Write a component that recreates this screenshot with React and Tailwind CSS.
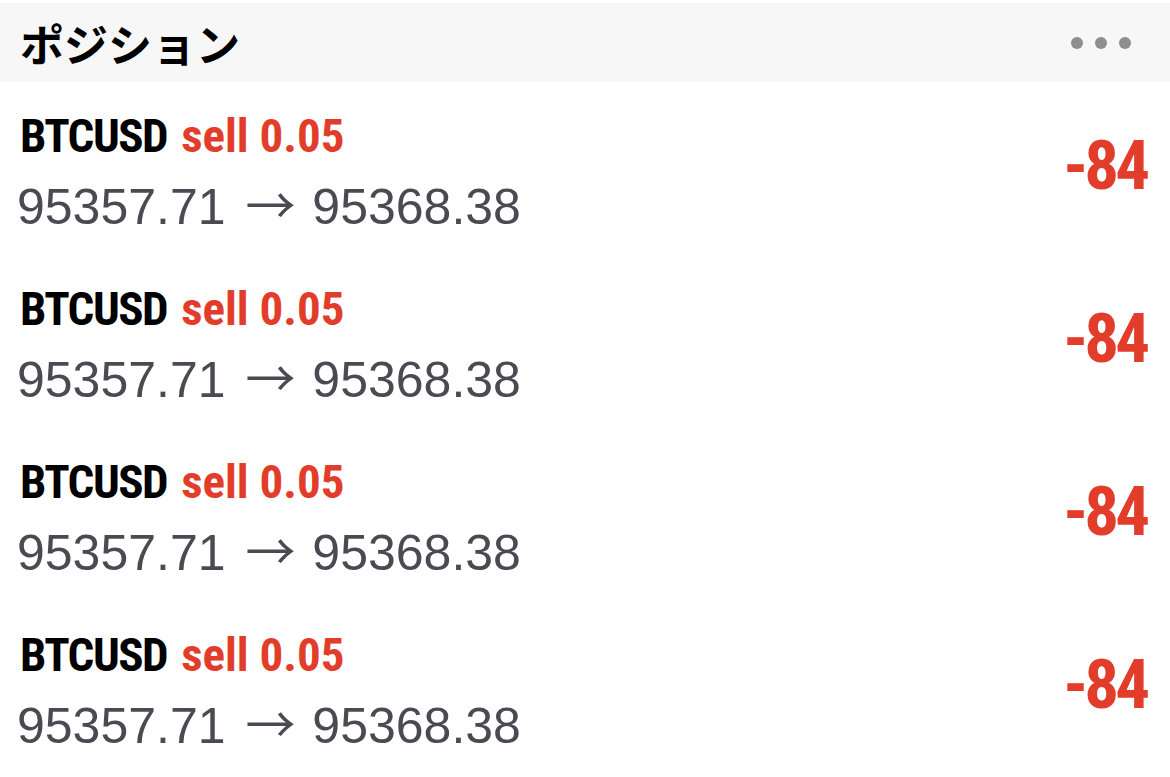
const positions = [
  { id: 1, symbol: "BTCUSD", side: "sell", lots: "0.05", open: "95357.71", current: "95368.38", profit: "-84" },
  { id: 2, symbol: "BTCUSD", side: "sell", lots: "0.05", open: "95357.71", current: "95368.38", profit: "-84" },
  { id: 3, symbol: "BTCUSD", side: "sell", lots: "0.05", open: "95357.71", current: "95368.38", profit: "-84" },
  { id: 4, symbol: "BTCUSD", side: "sell", lots: "0.05", open: "95357.71", current: "95368.38", profit: "-84" },
];

const App = () => {
  return (
    <div className="w-[1170px] h-[777px] bg-white overflow-hidden">
      {/* header */}
      <div className="mt-[3px] h-[79px] bg-[#f7f7f7] flex items-center justify-between pl-[20px] pr-[39px]">
        <h1 className="text-[44px] font-bold text-black font-['Noto_Sans_CJK_JP',sans-serif] leading-none">
          ポジション
        </h1>
        <div className="flex gap-[12px]">
          <span className="w-[12px] h-[12px] rounded-full bg-[#8e8e8e]"></span>
          <span className="w-[12px] h-[12px] rounded-full bg-[#8e8e8e]"></span>
          <span className="w-[12px] h-[12px] rounded-full bg-[#8e8e8e]"></span>
        </div>
      </div>

      {/* open positions */}
      <div>
        {positions.map((p) => (
          <div key={p.id} className="h-[173px] flex items-center justify-between pl-[17px] pr-[24px]">
            <div className="self-start pt-[26px] flex flex-col gap-[10px]">
              <p className="ml-[3px] flex items-baseline gap-[14px] text-[47px] leading-[56px] font-bold font-['Roboto',sans-serif] font-stretch-condensed">
                <span className="text-black tracking-[-1.5px]">{p.symbol}</span>
                <span className="text-[#e23d2b]">
                  {p.side} {p.lots}
                </span>
              </p>
              <p className="text-[50px] leading-[56px] text-[#4a4a52] font-['Liberation_Sans',sans-serif] whitespace-nowrap">
                {p.open}{" "}
                <span className="ml-[6px] mr-[3px] font-['Noto_Sans_CJK_JP',sans-serif]">→</span>{" "}
                {p.current}
              </p>
            </div>
            <span className="mb-[7px] text-[69px] leading-none tracking-[-4px] font-bold text-[#e23d2b] font-['Roboto',sans-serif] font-stretch-condensed">
              {p.profit}
            </span>
          </div>
        ))}
      </div>
    </div>
  );
};

export default App;
